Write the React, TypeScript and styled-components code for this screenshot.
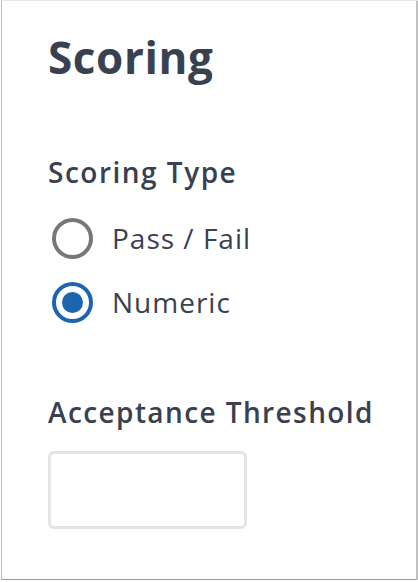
import React, { useState } from 'react'
import styled, { createGlobalStyle } from 'styled-components'

const GlobalStyle = createGlobalStyle`
  html, body {
    margin: 0;
    padding: 0;
    background: #ffffff;
  }
  body {
    font-family: 'Open Sans', Lato, 'Liberation Sans', sans-serif;
    color: #394150;
  }
`

type Option = {
  value: string
  label: string
}

const options: Option[] = [
  { value: 'pass_fail', label: 'Pass / Fail' },
  { value: 'numeric', label: 'Numeric' },
]

export default function App() {
  const [scoring, setScoring] = useState('numeric')

  return (
    <>
      <GlobalStyle />
      <StyledPanel>
        <StyledTitle>Scoring</StyledTitle>
        <StyledFieldset>
          <StyledLegend>Scoring Type</StyledLegend>
          <StyledRadioList>
            {options.map((option) => (
              <StyledRadioLabel key={option.value}>
                <StyledRadioInput
                  type="radio"
                  name="scoring"
                  value={option.value}
                  checked={scoring === option.value}
                  onChange={() => setScoring(option.value)}
                />
                <StyledRadioText>{option.label}</StyledRadioText>
              </StyledRadioLabel>
            ))}
          </StyledRadioList>
        </StyledFieldset>
        <StyledField>
          <StyledFieldLabel htmlFor="threshold">Acceptance Threshold</StyledFieldLabel>
          <StyledTextInput id="threshold" type="text" />
        </StyledField>
      </StyledPanel>
    </>
  )
}

const StyledPanel = styled('div')`
  box-sizing: border-box;
  width: 416px;
  height: 580px;
  margin-left: 1px;
  padding: 26px 30px 0 46px;
  background: #ffffff;
  border-left: 1px solid #bdbdbd;
  border-top: 1px solid #e6e6e6;
  border-right: 1px solid #c4c4c4;
  border-bottom: 1px solid #9a9a9a;
  box-shadow: 1px 1px 1px rgba(0, 0, 0, 0.25);
`

const StyledTitle = styled('h1')`
  margin: 0;
  font-size: 44px;
  font-weight: 700;
  line-height: 60px;
  letter-spacing: 0.6px;
`

const StyledFieldset = styled('div')`
  margin-top: 68px;
`

const StyledLegend = styled('div')`
  font-size: 28px;
  font-weight: 600;
  line-height: 34px;
  letter-spacing: 1.5px;
`

const StyledRadioList = styled('div')`
  display: flex;
  flex-direction: column;
  gap: 23px;
  margin-top: 29px;
`

const StyledRadioLabel = styled('label')`
  display: flex;
  align-items: center;
  gap: 19px;
  padding-left: 4px;
  cursor: pointer;
`

const StyledRadioInput = styled('input')`
  appearance: none;
  box-sizing: border-box;
  width: 41px;
  height: 41px;
  margin: 0;
  border-radius: 50%;
  border: 4px solid #777777;
  background: #ffffff;
  display: grid;
  place-items: center;

  &:checked {
    border-color: #1d65ae;
  }

  &:checked::after {
    content: '';
    width: 21px;
    height: 21px;
    border-radius: 50%;
    background: #1d65ae;
  }
`

const StyledRadioText = styled('span')`
  font-size: 28px;
  font-weight: 400;
  line-height: 41px;
  letter-spacing: 1px;
`

const StyledField = styled('div')`
  margin-top: 72px;
`

const StyledFieldLabel = styled('label')`
  display: block;
  font-size: 28px;
  font-weight: 600;
  line-height: 34px;
  letter-spacing: 1.4px;
  white-space: nowrap;
`

const StyledTextInput = styled('input')`
  box-sizing: border-box;
  display: block;
  width: 199px;
  height: 78px;
  margin-top: 22px;
  border: 3px solid #e2e5e8;
  border-radius: 6px;
  outline: none;
`
